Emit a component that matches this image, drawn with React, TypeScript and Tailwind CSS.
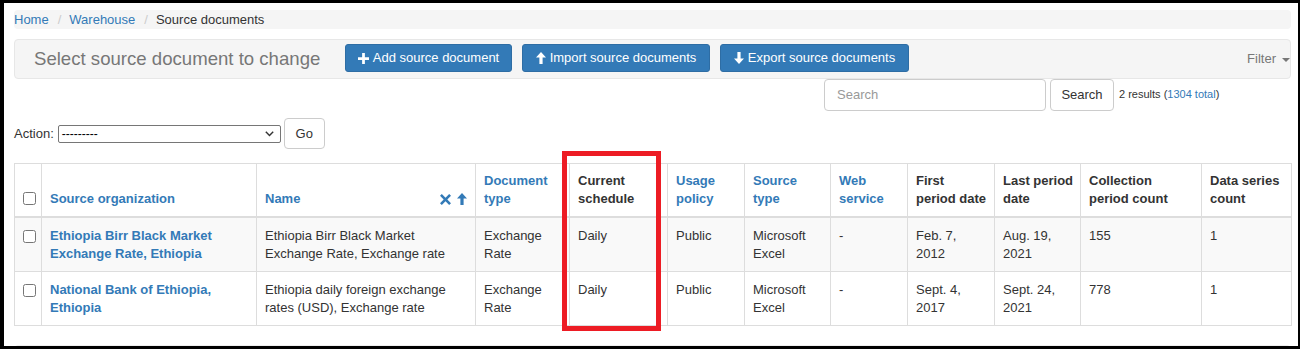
import React from 'react'

function PlusIcon() {
  return (
    <svg width="11" height="11" viewBox="0 0 12 12" className="inline-block">
      <path d="M4.5 0h3v4.5H12v3H7.5V12h-3V7.5H0v-3h4.5z" fill="currentColor" />
    </svg>
  )
}

function ArrowUp({ size = 12 }: { size?: number }) {
  return (
    <svg width={size - 2} height={size} viewBox="0 0 10 12" className="inline-block">
      <path d="M5 0l5 5.5H6.6V12H3.4V5.5H0z" fill="currentColor" />
    </svg>
  )
}

function ArrowDown() {
  return (
    <svg width="10" height="12" viewBox="0 0 10 12" className="inline-block">
      <path d="M5 12l5-5.5H6.6V0H3.4v6.5H0z" fill="currentColor" />
    </svg>
  )
}

function RemoveIcon() {
  return (
    <svg width="11" height="11" viewBox="0 0 12 12" className="inline-block">
      <path d="M2 0l4 4 4-4 2 2-4 4 4 4-2 2-4-4-4 4-2-2 4-4-4-4z" fill="currentColor" />
    </svg>
  )
}

// header labels, split where the reference wraps them
const columns = [
  { lines: ['Source organization'], link: true, w: 215 },
  { lines: ['Name'], link: true, w: 219, sort: true },
  { lines: ['Document', 'type'], link: true, w: 94 },
  { lines: ['Current', 'schedule'], link: false, w: 98 },
  { lines: ['Usage', 'policy'], link: true, w: 77 },
  { lines: ['Source', 'type'], link: true, w: 86 },
  { lines: ['Web', 'service'], link: true, w: 77 },
  { lines: ['First', 'period date'], link: false, w: 87 },
  { lines: ['Last period', 'date'], link: false, w: 86 },
  { lines: ['Collection', 'period count'], link: false, w: 121 },
  { lines: ['Data series', 'count'], link: false, w: 90 },
]

const rows = [
  [
    'Ethiopia Birr Black Market Exchange Rate, Ethiopia',
    'Ethiopia Birr Black Market Exchange Rate, Exchange rate',
    'Exchange Rate',
    'Daily',
    'Public',
    'Microsoft Excel',
    '-',
    'Feb. 7, 2012',
    'Aug. 19, 2021',
    '155',
    '1',
  ],
  [
    'National Bank of Ethiopia, Ethiopia',
    'Ethiopia daily foreign exchange rates (USD), Exchange rate',
    'Exchange Rate',
    'Daily',
    'Public',
    'Microsoft Excel',
    '-',
    'Sept. 4, 2017',
    'Sept. 24, 2021',
    '778',
    '1',
  ],
]

export default function App() {
  return (
    <div
      className="relative w-[1300px] h-[352px] bg-white overflow-hidden text-[13px] leading-[18px] text-[#333]"
      style={{ fontFamily: '"Liberation Sans", Arial, sans-serif' }}
    >
      <div className="h-[349px] overflow-hidden border-l-4 border-t-[3px] border-r-2 border-b-[3px] border-black pl-[10px] pr-[7px]">
        {/* breadcrumb */}
        <div className="mt-[7px] h-[19px] flex items-center bg-[#f5f5f5] rounded-[4px]">
          <a className="text-[#337ab7]">Home</a>
          <span className="pl-[9px] pr-[8px] text-[#ccc]">/</span>
          <a className="text-[#337ab7]">Warehouse</a>
          <span className="pl-[9px] pr-[8px] text-[#ccc]">/</span>
          <span>Source documents</span>
        </div>

        {/* header panel */}
        <div className="mt-[10px] h-[40px] flex items-center bg-[#f5f5f5] border border-[#e7e7e7] rounded-[4px] pl-[19px] pr-0">
          <span className="text-[18.6px] text-[#777] w-[311px]">Select source document to change</span>
          <div className="flex gap-[10px] -mt-[2px]">
            <button className="h-[28px] w-[167px] flex items-center justify-center gap-[4px] bg-[#337ab7] border border-[#2e6da4] rounded-[3px] text-white">
              <PlusIcon />
              <span>Add source document</span>
            </button>
            <button className="h-[28px] w-[188px] flex items-center justify-center gap-[4px] bg-[#337ab7] border border-[#2e6da4] rounded-[3px] text-white">
              <ArrowUp />
              <span>Import source documents</span>
            </button>
            <button className="h-[28px] w-[189px] flex items-center justify-center gap-[4px] bg-[#337ab7] border border-[#2e6da4] rounded-[3px] text-white">
              <ArrowDown />
              <span>Export source documents</span>
            </button>
          </div>
          <div className="ml-auto flex items-center gap-[6px] text-[#777]">
            <span>Filter</span>
            <span className="w-0 h-0 border-l-[4px] border-r-[4px] border-t-[4px] border-l-transparent border-r-transparent border-t-[#777] mt-[2px]" />
          </div>
        </div>

        {/* search */}
        <div className="flex items-center pl-[810px]">
          <div className="h-[32px] w-[222px] flex items-center px-[12px] border border-[#ccc] rounded-[4px] text-[#999]">
            Search
          </div>
          <button className="ml-[4px] h-[32px] w-[64px] border border-[#ccc] rounded-[4px] bg-white text-[#333]">
            Search
          </button>
          <span className="ml-[5px] text-[11px] -mt-[3px]">
            2 results (<a className="text-[#337ab7]">1304 total</a>)
          </span>
        </div>

        {/* action */}
        <div className="mt-[7px] flex items-center">
          <span>Action:</span>
          <div className="ml-[4px] h-[18px] w-[223px] flex items-center justify-between border border-[#767676] rounded-[2px] pl-[3px] pr-[6px] text-[12px] text-black">
            <span className="leading-none">---------</span>
            <svg width="9" height="6" viewBox="0 0 9 6">
              <path d="M0.8 0.8L4.5 4.6 8.2 0.8" fill="none" stroke="#333" strokeWidth="1.4" />
            </svg>
          </div>
          <button className="ml-[3px] h-[31px] w-[41px] border border-[#ccc] rounded-[4px] bg-white">Go</button>
        </div>

        {/* table */}
        <table className="mt-[14px] w-[1277px] table-fixed border-collapse">
          <colgroup>
            <col style={{ width: 27 }} />
            {columns.map((c, i) => (
              <col key={i} style={{ width: c.w }} />
            ))}
          </colgroup>
          <thead>
            <tr>
              <th className="border border-b-2 border-[#ddd] px-[8px] pb-[8px] align-bottom text-left">
                <input type="checkbox" className="block w-[13px] h-[13px] mb-[3px]" />
              </th>
              {columns.map((c, i) => (
                <th
                  key={i}
                  className={`border border-b-2 border-[#ddd] pl-[8px] pr-[4px] pt-[8px] pb-[8px] h-[53px] align-bottom text-left font-bold whitespace-nowrap ${
                    c.link ? 'text-[#337ab7]' : 'text-[#333]'
                  }`}
                >
                  {c.sort ? (
                    <div className="flex items-center justify-between pr-[4px]">
                      <span>{c.lines[0]}</span>
                      <span className="flex items-center gap-[6px]">
                        <RemoveIcon />
                        <ArrowUp />
                      </span>
                    </div>
                  ) : (
                    c.lines.map((l, j) => <div key={j}>{l}</div>)
                  )}
                </th>
              ))}
            </tr>
          </thead>
          <tbody>
            {rows.map((row, r) => (
              <tr key={r} className={r === 0 ? 'bg-[#f9f9f9]' : 'bg-white'}>
                <td className="border border-[#ddd] px-[8px] pt-[9px] pb-[8px] align-top">
                  <input type="checkbox" className="block w-[13px] h-[13px] mt-[3px]" />
                </td>
                {row.map((cell, i) => (
                  <td
                    key={i}
                    className={`border border-[#ddd] pl-[8px] pr-[6px] pt-[9px] pb-[8px] h-[53px] align-top ${
                      i === 0 ? 'font-bold text-[#337ab7]' : 'text-[#333]'
                    }`}
                  >
                    {cell}
                  </td>
                ))}
              </tr>
            ))}
          </tbody>
        </table>

        <div className="mt-[19px] h-[40px] bg-[#f9f9f9] border border-[#eee] rounded-[4px]" />
      </div>

      {/* highlight annotation */}
      <div className="absolute left-[562px] top-[151px] w-[99px] h-[180px] border-[5px] border-[#ed1c24]" />
    </div>
  )
}
